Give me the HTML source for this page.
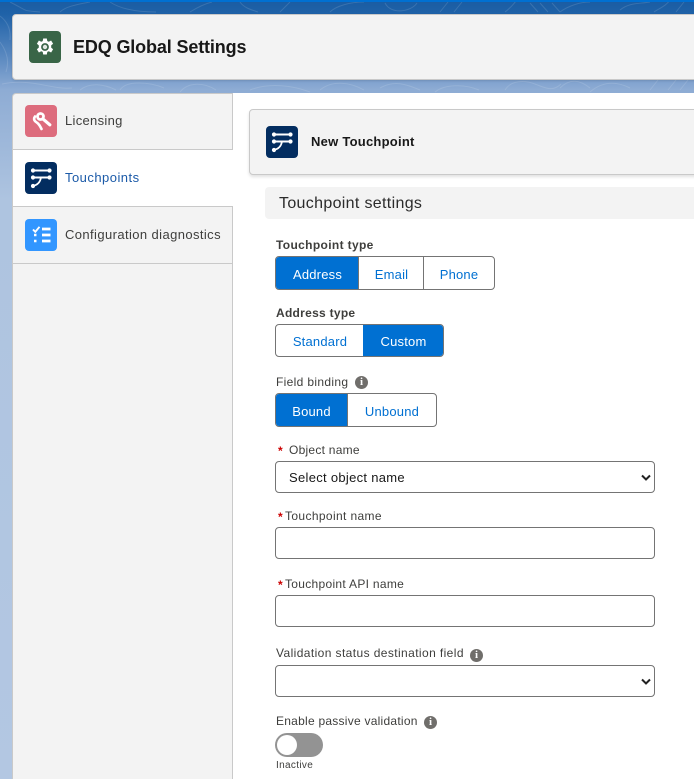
<!DOCTYPE html>
<html><head><meta charset="utf-8">
<style>
html,body{margin:0;padding:0}
body{width:694px;height:779px;position:relative;overflow:hidden;background:linear-gradient(180deg,#1a5ca2 0,#1f62a8 14px,#5f8cc2 60px,#8eacd4 90px,#aec4e0 200px,#b3c7e2 779px);font-family:"Liberation Sans",sans-serif;color:#3e3e3c}
.a{position:absolute;box-sizing:border-box}
.t{position:absolute;white-space:nowrap;font-size:13px;line-height:16px}
.ic{position:absolute;width:32px;height:32px;border-radius:4px}
.ic svg{display:block}
.seg{position:absolute;box-sizing:border-box;border:1px solid #747474;border-radius:4px;background:#fff;overflow:hidden;font-size:13px;color:#0070d2;letter-spacing:.2px}
.seg span{position:absolute;top:0;bottom:0;display:block;text-align:center;line-height:35px;box-sizing:border-box}
.seg .on{background:#0070d2;color:#fff}
.seg .b{border-left:1px solid #747474}
.inp{position:absolute;left:275px;width:380px;height:32px;box-sizing:border-box;border:1px solid #747474;border-radius:4px;background:#fff}
.lab{letter-spacing:.25px;color:#3e3e3c;font-size:12px}
.bold{font-weight:700;letter-spacing:.2px}
.info{position:absolute;width:13px;height:13px;border-radius:50%;background:#706e6b;color:#fff;font:700 11px/13px "Liberation Serif",serif;text-align:center}
.req{position:absolute;color:#c00;font-size:12px;line-height:16px;font-weight:700}
</style></head><body>
<svg class="a" style="left:0;top:0" width="694" height="93" fill="none" stroke="#fff" stroke-opacity=".13" stroke-width="1">
<path d="M10 2c20 10 10 8 30 10M60 12c6-6 20-8 30-10M110 2c12 8 30 10 46 10M190 12c8-5 14-8 22-10M240 2c4 6 12 8 18 10M280 12l10-10M330 12c6-6 20-10 34-10M385 3c6 12 26 9 32 0M440 12l8-10M454 12l8-10M505 12c8-6 8-8 12-12M530 3l8 9M540 3l8 9M552 3l8 9M560 12c8-6 20-10 30-10M620 10c10-8 20-6 30-8M654 12c6-4 12-6 16-12M676 12l8-10"/>
<path d="M0 16c8 6 11 14 10 24M0 42c6 8 10 18 6 30M2 84c30-6 50 6 70 4M80 90c10-8 24-6 36 0M120 90c6-10 30-8 44-2M180 92c8-10 24-10 36-2M250 90c20-8 44-4 60 2M320 90c12-10 30-8 44 0M380 88c14-8 26-4 40 2M435 92c10-8 30-8 44-2M505 90c6-10 20-10 30-6 10 4 18 8 26 0M560 88c10-10 20-8 30 0M590 92c14-12 28-10 40-4M650 90l8-10M668 90l8-10M680 90l8-10"/>
</svg>
<div class="a" style="left:0;top:0;width:694px;height:2px;background:#0070d2"></div>

<div class="a" style="left:12px;top:14px;width:690px;height:66px;background:#f3f3f3;border:1px solid #c9c9c9;border-radius:4px;box-shadow:0 1px 2px rgba(0,0,0,.12)"></div>
<div class="ic" style="left:29px;top:31px;background:#396547">
<svg width="32" height="32" viewBox="0 0 32 32"><path fill="#fff" d="M14.200 7.500h3.600l.5 2.600 1.500.7 2.300-1.300 2 3.200-1.900 1.700v2.200l1.900 1.700-2 3.200-2.300-1.300-1.500.7-.5 2.600h-3.600l-.5-2.600-1.500-.7-2.300 1.300-2-3.200 1.900-1.700v-2.200L7.900 12.700l2-3.200 2.300 1.300 1.500-.7z"/><circle cx="16" cy="16" r="3.900" fill="#396547"/><circle cx="16" cy="16" r="2.200" fill="#fff" opacity=".85"/></svg>
</div>
<div class="t" style="left:73px;top:36px;font-size:18px;line-height:22px;font-weight:700;color:#181818;letter-spacing:-.14px">EDQ Global Settings</div>

<div class="a" style="left:233px;top:93px;width:461px;height:686px;background:#fff"></div>
<div class="a" style="left:12px;top:93px;width:221px;height:686px;background:#f3f3f3;border:1px solid #c9c9c9;border-bottom:0;border-radius:4px 0 0 0"></div>
<div class="a" style="left:13px;top:149px;width:220px;height:58px;background:#fff;border-top:1px solid #c9c9c9;border-bottom:1px solid #c9c9c9"></div>
<div class="a" style="left:13px;top:263px;width:219px;height:1px;background:#c9c9c9"></div>

<div class="ic" style="left:25px;top:105px;background:#dd6c7d">
<svg width="32" height="32" viewBox="0 0 32 32" fill="none" stroke="#fff" stroke-linecap="round"><circle cx="15.500" cy="11.500" r="3" stroke-width="2.800"/><path d="M17.800 13.800l7 6" stroke-width="3.200"/><path d="M10 11.500c-1.800 2.600-.6 4.500 1.500 5.800 2.500 1.600 3.500 3.600 5 6.700" stroke-width="2.600"/></svg>
</div>
<div class="t" style="left:65px;top:113px;letter-spacing:.3px">Licensing</div>

<div class="ic" style="left:25px;top:162px;background:#032d60">
<svg width="32" height="32" viewBox="0 0 32 32" fill="none" stroke="#fff" stroke-width="2" stroke-linecap="round"><path d="M8 8.500h17M8 15.500h17"/><path d="M16 15.500c-.8 4.800-3.500 7.500-8 8.500" stroke-width="1.700"/><g fill="#fff" stroke="none"><circle cx="8" cy="8.500" r="2.100"/><circle cx="24.500" cy="8.500" r="2.100"/><circle cx="8" cy="15.500" r="2.100"/><circle cx="24.500" cy="15.500" r="2.100"/><circle cx="8" cy="24" r="2.100"/></g></svg>
</div>
<div class="t" style="left:65px;top:170px;letter-spacing:.47px;color:#1b5aa8">Touchpoints</div>

<div class="ic" style="left:25px;top:219px;background:#3296ff">
<svg width="32" height="32" viewBox="0 0 32 32" fill="none" stroke="#fff"><path d="M8 10.500l2.300 2.300 4.200-5" stroke-width="1.900"/><path d="M17 10h8.500M17 16h8.500M17 22h8.500" stroke-width="2.800"/><path d="M9 16h2.500M9 22h2.500" stroke-width="2.400"/></svg>
</div>
<div class="t" style="left:65px;top:227px;letter-spacing:.4px">Configuration diagnostics</div>

<div class="a" style="left:249px;top:109px;width:460px;height:66px;background:#f3f3f3;border:1px solid #c9c9c9;border-radius:4px;box-shadow:0 2px 3px rgba(0,0,0,.12)"></div>
<div class="ic" style="left:266px;top:126px;background:#032d60">
<svg width="32" height="32" viewBox="0 0 32 32" fill="none" stroke="#fff" stroke-width="2" stroke-linecap="round"><path d="M8 8.500h17M8 15.500h17"/><path d="M16 15.500c-.8 4.800-3.500 7.500-8 8.500" stroke-width="1.700"/><g fill="#fff" stroke="none"><circle cx="8" cy="8.500" r="2.100"/><circle cx="24.500" cy="8.500" r="2.100"/><circle cx="8" cy="15.500" r="2.100"/><circle cx="24.500" cy="15.500" r="2.100"/><circle cx="8" cy="24" r="2.100"/></g></svg>
</div>
<div class="t" style="left:311px;top:134px;font-weight:700;color:#181818;letter-spacing:.25px">New Touchpoint</div>

<div class="a" style="left:265px;top:187px;width:429px;height:32px;background:#f3f3f3;border-radius:4px 0 0 4px"></div>
<div class="t" style="left:279px;top:194px;font-size:16px;line-height:20px;color:#2b2b2b;letter-spacing:.33px">Touchpoint settings</div>

<div class="t lab bold" style="left:276px;top:237px;letter-spacing:.35px">Touchpoint type</div>
<div class="seg" style="left:275px;top:256px;width:220px;height:34px">
<span class="on" style="left:0;width:83px">Address</span>
<span class="b" style="left:82px;width:66px">Email</span>
<span class="b" style="left:147px;width:71px">Phone</span>
</div>

<div class="t lab bold" style="left:276px;top:305px;letter-spacing:.28px">Address type</div>
<div class="seg" style="left:275px;top:324px;width:169px;height:33px">
<span style="left:0;width:88px;line-height:33px">Standard</span>
<span class="on" style="left:88px;width:79px;line-height:33px;border-left:1px solid #0070d2;margin-left:-1px;width:80px">Custom</span>
</div>

<div class="t lab" style="left:276px;top:374px;letter-spacing:.33px">Field binding</div>
<div class="info" style="left:355px;top:376px">i</div>
<div class="seg" style="left:275px;top:393px;width:162px;height:34px">
<span class="on" style="left:0;width:71px;line-height:36px">Bound</span>
<span class="b" style="left:71px;width:89px;line-height:36px">Unbound</span>
</div>

<div class="req" style="left:278px;top:443px">*</div>
<div class="t lab" style="left:289px;top:442px">Object name</div>
<div class="inp" style="top:461px"></div>
<div class="t" style="left:289px;top:470px;color:#181818;letter-spacing:.3px">Select object name</div>
<svg class="a" style="left:640px;top:474px" width="12" height="8" fill="none" stroke="#222" stroke-width="2"><path d="M2 1.500l4 4 4-4"/></svg>

<div class="req" style="left:278px;top:509px">*</div>
<div class="t lab" style="left:285px;top:508px;letter-spacing:.37px">Touchpoint name</div>
<div class="inp" style="top:527px"></div>

<div class="req" style="left:278px;top:577px">*</div>
<div class="t lab" style="left:285px;top:576px;letter-spacing:.3px">Touchpoint API name</div>
<div class="inp" style="top:595px"></div>

<div class="t lab" style="left:276px;top:645px;letter-spacing:.4px">Validation status destination field</div>
<div class="info" style="left:470px;top:649px">i</div>
<div class="inp" style="top:665px"></div>
<svg class="a" style="left:640px;top:678px" width="12" height="8" fill="none" stroke="#222" stroke-width="2"><path d="M2 1.500l4 4 4-4"/></svg>

<div class="t lab" style="left:276px;top:713px">Enable passive validation</div>
<div class="info" style="left:424px;top:716px">i</div>
<div class="a" style="left:275px;top:733px;width:48px;height:24px;border-radius:12px;background:#939393"></div>
<div class="a" style="left:277px;top:735px;width:20px;height:20px;border-radius:50%;background:#fff"></div>
<div class="t" style="left:276px;top:759px;font-size:10px;line-height:14px;letter-spacing:.33px">Inactive</div>
</body></html>
